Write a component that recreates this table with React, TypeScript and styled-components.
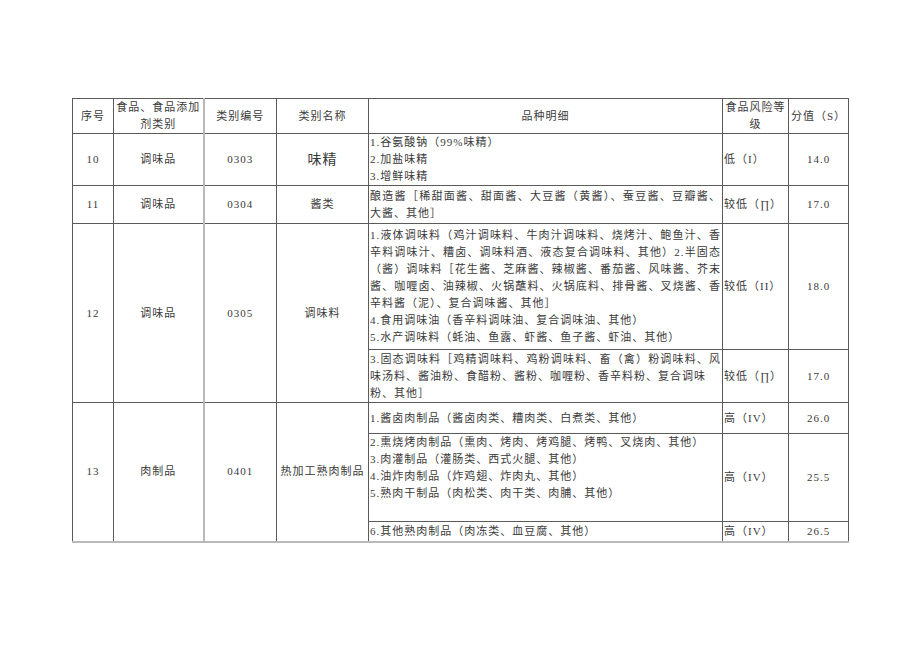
import React from "react";
import styled, { createGlobalStyle } from "styled-components";

const GlobalStyle = createGlobalStyle`
  html, body {
    margin: 0;
    padding: 0;
    background: #ffffff;
  }
  body {
    font-family: "Liberation Serif", "Noto Sans CJK SC", serif;
    color: #333;
  }
`;

const DARK = "#5b5b5b";
const LIGHT = "#b9b9b9";

const Page = styled.div`
  width: 920px;
  height: 651px;
  padding: 98px 0 0 72px;
  box-sizing: border-box;
`;

const Table = styled.table`
  width: 776px;
  border-collapse: collapse;
  table-layout: fixed;
  font-size: 11px;
  letter-spacing: 1px;
  border-top: 1px solid ${DARK};
  border-left: 1px solid ${LIGHT};
  border-right: 1px solid ${LIGHT};
  border-bottom: 2px solid ${LIGHT};
`;

const Row = styled.tr<{ $h: number }>`
  height: ${({ $h }) => $h}px;
`;

const HeadCell = styled.th<{ $lightLeft?: boolean }>`
  font-weight: normal;
  text-align: center;
  vertical-align: middle;
  line-height: 17px;
  padding: 0 1px;
  border: 1px solid ${DARK};
  ${({ $lightLeft }) =>
    $lightLeft ? `border-left: 2px solid ${LIGHT};` : ""}
  color: #3a3a3a;
`;

const Cell = styled.td<{
  $align?: "left" | "center";
  $top?: boolean;
  $big?: boolean;
  $lightLeft?: boolean;
}>`
  text-align: ${({ $align }) => $align || "center"};
  vertical-align: ${({ $top }) => ($top ? "top" : "middle")};
  font-size: ${({ $big }) => ($big ? "14px" : "11px")};
  line-height: 17px;
  padding: 0 1px;
  border: 1px solid ${DARK};
  ${({ $lightLeft }) =>
    $lightLeft ? `border-left: 2px solid ${LIGHT};` : ""}
  color: #3a3a3a;
  overflow: hidden;
`;

const Line = styled.div<{ $full?: boolean }>`
  text-align: ${({ $full }) => ($full ? "justify" : "left")};
  text-align-last: ${({ $full }) => ($full ? "justify" : "left")};
  white-space: ${({ $full }) => ($full ? "normal" : "nowrap")};
`;

type L = { t: string; full?: boolean };

const Detail: React.FC<{ lines: L[] }> = ({ lines }) => (
  <>
    {lines.map((l, i) => (
      <Line key={i} $full={l.full}>
        {l.t}
      </Line>
    ))}
  </>
);

const App: React.FC = () => {
  return (
    <Page>
      <GlobalStyle />
      <Table>
        <colgroup>
          <col style={{ width: 41 }} />
          <col style={{ width: 90 }} />
          <col style={{ width: 73 }} />
          <col style={{ width: 92 }} />
          <col style={{ width: 354 }} />
          <col style={{ width: 66 }} />
          <col style={{ width: 60 }} />
        </colgroup>
        <thead>
          <Row $h={33}>
            <HeadCell>序号</HeadCell>
            <HeadCell>
              食品、食品添加
              <br />
              剂类别
            </HeadCell>
            <HeadCell $lightLeft>类别编号</HeadCell>
            <HeadCell>类别名称</HeadCell>
            <HeadCell>品种明细</HeadCell>
            <HeadCell>
              食品风险等
              <br />
              级
            </HeadCell>
            <HeadCell>分值（S）</HeadCell>
          </Row>
        </thead>
        <tbody>
          <Row $h={51}>
            <Cell>10</Cell>
            <Cell>调味品</Cell>
            <Cell $lightLeft>0303</Cell>
            <Cell $big>味精</Cell>
            <Cell $align="left">
              <Detail
                lines={[
                  { t: "1.谷氨酸钠（99%味精）" },
                  { t: "2.加盐味精" },
                  { t: "3.增鲜味精" },
                ]}
              />
            </Cell>
            <Cell $align="left">低（I）</Cell>
            <Cell>14.0</Cell>
          </Row>
          <Row $h={38}>
            <Cell>11</Cell>
            <Cell>调味品</Cell>
            <Cell $lightLeft>0304</Cell>
            <Cell>酱类</Cell>
            <Cell $align="left">
              <Detail
                lines={[
                  {
                    t: "酿造酱［稀甜面酱、甜面酱、大豆酱（黄酱）、蚕豆酱、豆瓣酱、",
                    full: true,
                  },
                  { t: "大酱、其他］" },
                ]}
              />
            </Cell>
            <Cell $align="left">较低（∏）</Cell>
            <Cell>17.0</Cell>
          </Row>
          <Row $h={126}>
            <Cell rowSpan={2}>12</Cell>
            <Cell rowSpan={2}>调味品</Cell>
            <Cell rowSpan={2} $lightLeft>
              0305
            </Cell>
            <Cell rowSpan={2}>调味料</Cell>
            <Cell $align="left">
              <Detail
                lines={[
                  {
                    t: "1.液体调味料（鸡汁调味料、牛肉汁调味料、烧烤汁、鲍鱼汁、香",
                    full: true,
                  },
                  {
                    t: "辛料调味汁、糟卤、调味料酒、液态复合调味料、其他）2.半固态",
                    full: true,
                  },
                  {
                    t: "（酱）调味料［花生酱、芝麻酱、辣椒酱、番茄酱、风味酱、芥末",
                    full: true,
                  },
                  {
                    t: "酱、咖喱卤、油辣椒、火锅蘸料、火锅底料、排骨酱、叉烧酱、香",
                    full: true,
                  },
                  { t: "辛料酱（泥）、复合调味酱、其他］" },
                  { t: "4.食用调味油（香辛料调味油、复合调味油、其他）" },
                  { t: "5.水产调味料（蚝油、鱼露、虾酱、鱼子酱、虾油、其他）" },
                ]}
              />
            </Cell>
            <Cell $align="left">较低（II）</Cell>
            <Cell>18.0</Cell>
          </Row>
          <Row $h={53}>
            <Cell $align="left">
              <Detail
                lines={[
                  {
                    t: "3.固态调味料［鸡精调味料、鸡粉调味料、畜（禽）粉调味料、风",
                    full: true,
                  },
                  { t: "味汤料、酱油粉、食醋粉、酱粉、咖喱粉、香辛料粉、复合调味" },
                  { t: "粉、其他］" },
                ]}
              />
            </Cell>
            <Cell $align="left">较低（∏）</Cell>
            <Cell>17.0</Cell>
          </Row>
          <Row $h={31}>
            <Cell rowSpan={3}>13</Cell>
            <Cell rowSpan={3}>肉制品</Cell>
            <Cell rowSpan={3} $lightLeft>
              0401
            </Cell>
            <Cell rowSpan={3}>热加工熟肉制品</Cell>
            <Cell $align="left">
              1.酱卤肉制品（酱卤肉类、糟肉类、白煮类、其他）
            </Cell>
            <Cell $align="left">高（IV）</Cell>
            <Cell>26.0</Cell>
          </Row>
          <Row $h={88}>
            <Cell $align="left" $top>
              <Detail
                lines={[
                  { t: "2.熏烧烤肉制品（熏肉、烤肉、烤鸡腿、烤鸭、叉烧肉、其他）" },
                  { t: "3.肉灌制品（灌肠类、西式火腿、其他）" },
                  { t: "4.油炸肉制品（炸鸡翅、炸肉丸、其他）" },
                  { t: "5.熟肉干制品（肉松类、肉干类、肉脯、其他）" },
                ]}
              />
            </Cell>
            <Cell $align="left">高（IV）</Cell>
            <Cell>25.5</Cell>
          </Row>
          <Row $h={20}>
            <Cell $align="left">6.其他熟肉制品（肉冻类、血豆腐、其他）</Cell>
            <Cell $align="left">高（IV）</Cell>
            <Cell>26.5</Cell>
          </Row>
        </tbody>
      </Table>
    </Page>
  );
};

export default App;
